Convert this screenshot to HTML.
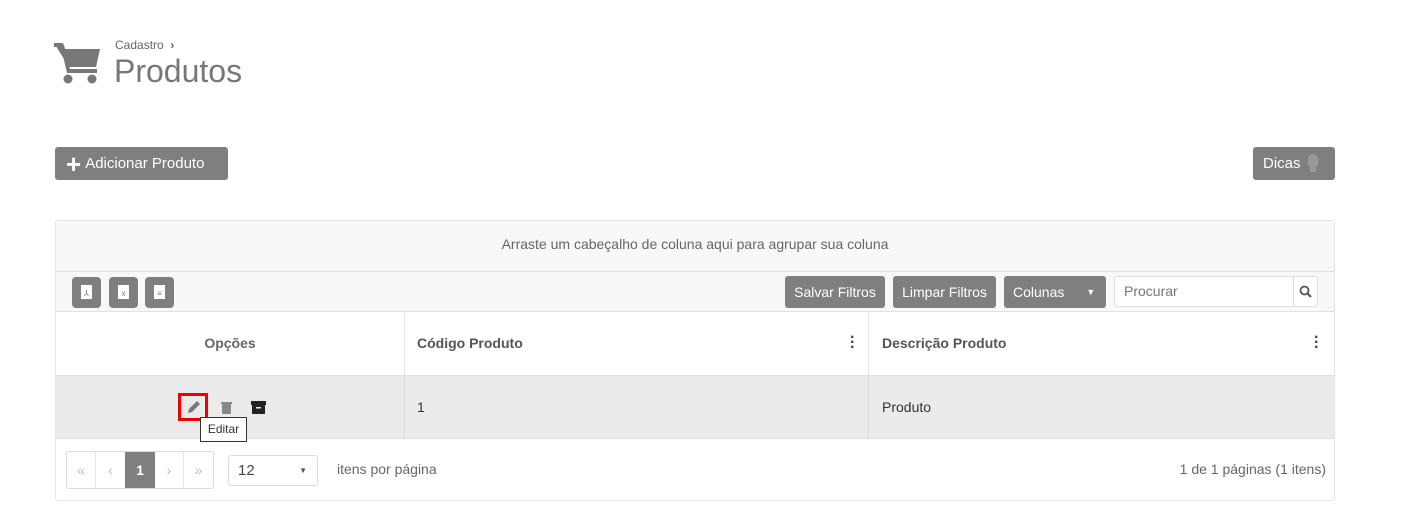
<!DOCTYPE html>
<html><head><meta charset="utf-8"><style>
*{box-sizing:border-box;margin:0;padding:0}
body{width:1412px;height:528px;background:#fff;font-family:"Liberation Sans",sans-serif;color:#555;position:relative;overflow:hidden}
.abs{position:absolute}
.btn{position:absolute;background:#7f7f7f;color:#fff;border-radius:3px;font-size:15px;display:flex;align-items:center}
.sm{font-size:14px;justify-content:center}
.ic{position:absolute;top:277px;width:29px;height:31px;background:#7f7f7f;border-radius:4px}
.ic span{position:absolute;left:9px;top:8px;width:11px;height:14px;background:#fff;font-size:8px;color:#777;text-align:center;line-height:18px}
.th{position:absolute;top:311px;height:64px;font-size:14px;color:#555;display:flex;align-items:center;font-weight:bold}
</style></head><body>
<svg class="abs" style="left:54px;top:43px" width="48" height="42" viewBox="0 0 48 42"><path d="M0 0h9l2 6h35l-4 18H15z" fill="#777"/><path d="M10 2l6 24h27v4H13L7 4z" fill="#777"/><rect x="0" y="0" width="9" height="4" fill="#777"/><circle cx="14" cy="36" r="4.5" fill="#777"/><circle cx="38" cy="36" r="4.5" fill="#777"/></svg>
<div class="abs" style="left:115px;top:38px;font-size:12px;color:#666">Cadastro &nbsp;<b>›</b></div>
<div class="abs" style="left:114px;top:53px;font-size:32px;color:#777">Produtos</div>
<div class="btn" style="left:55px;top:147px;width:173px;height:33px;padding-left:11px"><span style="font-size:26px;font-weight:bold;margin-right:4px;line-height:1">+</span>Adicionar Produto</div>
<div class="btn" style="left:1253px;top:147px;width:82px;height:33px;padding-left:10px">Dicas <svg style="margin-left:6px" width="12" height="20" viewBox="0 0 12 20"><ellipse cx="6" cy="7" rx="5.5" ry="7" fill="#999"/><rect x="3" y="13" width="6" height="5" fill="#999"/></svg></div>
<div class="abs" style="left:55px;top:220px;width:1280px;height:281px;border:1px solid #e3e3e3;border-radius:3px"></div>
<div class="abs" style="left:56px;top:221px;width:1278px;height:51px;background:#f7f8f9;border-bottom:1px solid #e3e3e3;font-size:14px;color:#666;text-align:center;line-height:46px">Arraste um cabeçalho de coluna aqui para agrupar sua coluna</div>
<div class="abs" style="left:56px;top:272px;width:1278px;height:40px;background:#f7f8f9;border-bottom:1px solid #e3e3e3"></div>
<div class="ic" style="left:72px"><span>⅄</span></div>
<div class="ic" style="left:109px"><span>x</span></div>
<div class="ic" style="left:145px"><span>≡</span></div>
<div class="btn sm" style="left:785px;top:276px;width:100px;height:32px">Salvar Filtros</div>
<div class="btn sm" style="left:893px;top:276px;width:103px;height:32px">Limpar Filtros</div>
<div class="btn sm" style="left:1004px;top:276px;width:102px;height:32px;justify-content:flex-start;padding-left:9px">Colunas<span style="margin-left:22px;font-size:9px">▼</span></div>
<div class="abs" style="left:1114px;top:276px;width:204px;height:31px;border:1px solid #ddd;border-radius:3px;background:#fff;font-size:14px;color:#777;line-height:29px;padding-left:9px">Procurar<div class="abs" style="left:178px;top:0;width:25px;height:29px;border-left:1px solid #ddd"><svg style="margin:8px 0 0 5px;display:block" width="13" height="13" viewBox="0 0 13 13"><circle cx="5.5" cy="5.5" r="4" stroke="#555" stroke-width="1.8" fill="none"/><path d="M8.5 8.5L12 12" stroke="#555" stroke-width="2"/></svg></div></div>
<div class="th" style="left:56px;width:348px;justify-content:center;color:#666">Opções</div>
<div class="abs" style="left:404px;top:312px;width:1px;height:127px;background:#e3e3e3"></div>
<div class="abs" style="left:868px;top:312px;width:1px;height:127px;background:#e3e3e3"></div>
<div class="th" style="left:417px">Código Produto</div>
<div class="th" style="left:882px">Descrição Produto</div>
<div class="abs" style="left:850px;top:335px;font-size:16px;font-weight:bold;line-height:5px;color:#444">·<br>·<br>·</div>
<div class="abs" style="left:1314px;top:335px;font-size:16px;font-weight:bold;line-height:5px;color:#444">·<br>·<br>·</div>
<div class="abs" style="left:56px;top:375px;width:1278px;height:64px;background:#ebebeb;border-top:1px solid #e0e0e0;border-bottom:1px solid #e0e0e0"></div>
<div class="abs" style="left:404px;top:376px;width:1px;height:63px;background:#ddd"></div>
<div class="abs" style="left:868px;top:376px;width:1px;height:63px;background:#ddd"></div>
<div class="abs" style="left:417px;top:399px;font-size:14px;color:#333">1</div>
<div class="abs" style="left:882px;top:399px;font-size:14px;color:#333">Produto</div>
<div class="abs" style="left:178px;top:393px;width:30px;height:28px;border:3px solid #e00"></div>
<svg class="abs" style="left:187px;top:400px" width="14" height="14" viewBox="0 0 14 14"><path d="M1 13l1-4 8-8 3 3-8 8z" fill="#777"/></svg>
<svg class="abs" style="left:221px;top:401px" width="11" height="13" viewBox="0 0 11 13"><rect x="0" y="1" width="11" height="2" fill="#888"/><rect x="1" y="3" width="9" height="10" rx="1" fill="#888"/></svg>
<svg class="abs" style="left:251px;top:401px" width="15" height="13" viewBox="0 0 15 13"><rect x="0" y="0" width="15" height="4" fill="#222"/><rect x="1" y="4" width="13" height="9" fill="#222"/><rect x="5" y="6" width="5" height="1.5" fill="#ebebeb"/></svg>
<div class="abs" style="left:200px;top:417px;width:47px;height:25px;border:1px solid #333;background:#fff;font-size:12px;color:#333;text-align:center;line-height:23px">Editar</div>
<div class="abs" style="left:66px;top:451px;width:148px;height:38px;border:1px solid #ddd;border-radius:3px;display:flex;font-size:14px;color:#bbb">
<div style="width:29px;text-align:center;line-height:36px;border-right:1px solid #e5e5e5">«</div>
<div style="width:29px;text-align:center;line-height:36px">‹</div>
<div style="width:30px;text-align:center;line-height:36px;background:#7f7f7f;color:#fff;font-weight:bold">1</div>
<div style="width:29px;text-align:center;line-height:36px;border-right:1px solid #e5e5e5">›</div>
<div style="width:29px;text-align:center;line-height:36px">»</div></div>
<div class="abs" style="left:228px;top:455px;width:90px;height:31px;border:1px solid #ddd;border-radius:3px;font-size:15px;color:#444;line-height:29px;padding-left:9px">12<span style="position:absolute;right:10px;font-size:8px;color:#555">▼</span></div>
<div class="abs" style="left:337px;top:461px;font-size:14px;color:#666">itens por página</div>
<div class="abs" style="right:86px;top:461px;font-size:14px;color:#666">1 de 1 páginas (1 itens)</div>
</body></html>
